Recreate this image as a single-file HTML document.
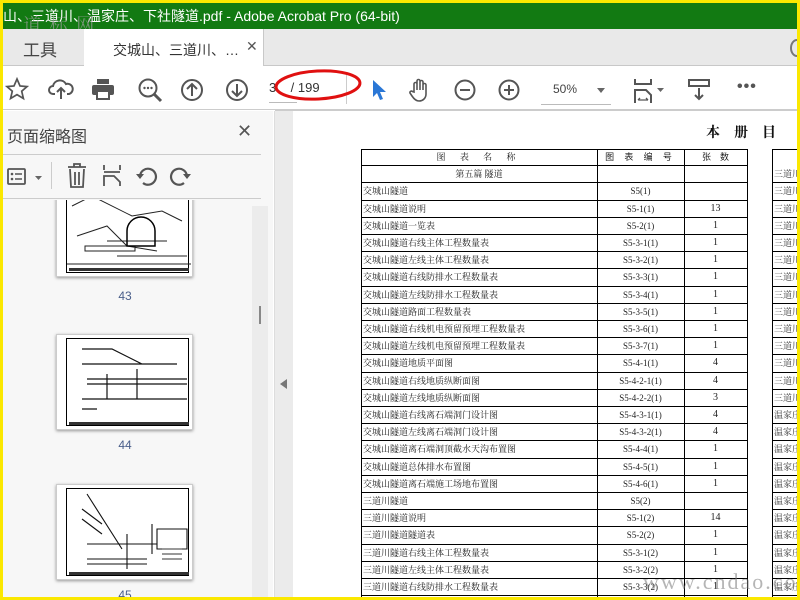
<!DOCTYPE html>
<html><head><meta charset="utf-8"><style>
*{margin:0;padding:0;box-sizing:border-box}
body{width:800px;height:600px;overflow:hidden;background:#fbe800;position:relative;font-family:"Liberation Sans","Noto Sans CJK SC",sans-serif}
.abs{position:absolute}
#win{position:absolute;left:3px;top:3px;width:794px;height:594px;background:#fff;overflow:hidden}
.title{position:absolute;left:0;top:0;width:794px;height:26px;background:#127a12;color:#fff;font-size:14px;line-height:26px;padding-left:0;white-space:nowrap}
.tabs{position:absolute;left:0;top:26px;width:794px;height:37px;background:#e9e9e9;border-bottom:1px solid #c8c8c8}
.tab1{position:absolute;left:20px;top:7px;font-size:17px;color:#444}
.tab2{position:absolute;left:81px;top:0;width:180px;height:38px;background:#fff;border-right:1px solid #c8c8c8;font-size:14px;color:#333;padding:11px 0 0 29px}
.tb{position:absolute;left:0;top:63px;width:794px;height:44px;border-bottom:1px solid #ccc;background:#fff}
svg.i{position:absolute}
.side{position:absolute;left:0;top:108px;width:270px;height:486px;background:#f7f7f7}
.strip{position:absolute;left:271px;top:108px;width:19px;height:486px;background:#ebebeb;border-left:1px solid #ddd}
.doc{position:absolute;left:290px;top:108px;width:504px;height:486px;background:#fff}
.clip{position:absolute;left:0;top:89px;width:249px;height:397px;overflow:hidden}
.thumb{position:absolute;left:53px;width:137px;height:96px;background:#fff;box-shadow:0 1px 3px rgba(0,0,0,.4);border:1px solid #ccc}
.thumb .in{position:absolute;left:9px;top:3px;right:3px;bottom:3px;border:1px solid #000}
.lbl{position:absolute;left:110px;font-size:12px;color:#4a5e8a;width:24px;text-align:center}
.row{position:absolute;left:358px;width:387px;height:17.2px;border-bottom:1px solid #000;font-size:9px;color:#222;font-family:"Noto Serif CJK SC","Liberation Serif",serif;line-height:16px}
.row span{position:absolute;top:0;height:17px}
.c1{left:2px}
.c2{left:236px;width:87px;text-align:center;font-family:"Liberation Serif","Noto Serif CJK SC",serif}
.c3{left:323px;width:63px;text-align:center;font-family:"Liberation Serif",serif;font-size:10px}
.rrow{position:absolute;left:769px;width:30px;height:17.2px;border-bottom:1px solid #000;font-size:9px;color:#333;line-height:16px;padding-left:2px;font-family:"Noto Serif CJK SC",serif;white-space:nowrap;overflow:hidden}
</style></head><body>
<div id="win">
<div class="title">山、三道川、温家庄、下社隧道.pdf - Adobe Acrobat Pro (64-bit)</div>
<div class="abs" style="left:20px;top:8px;font-size:18px;color:rgba(160,160,160,.7);font-family:'Noto Serif CJK SC',serif;letter-spacing:2px">道 标 网</div>
<div class="tabs"><div class="tab1">工具</div><div class="tab2">交城山、三道川、…<span style="position:absolute;left:162px;top:9px;font-size:14px;color:#555">✕</span></div>
<div class="abs" style="left:787px;top:10px;width:14px;height:18px;border:2px solid #777;border-radius:50%"></div></div>
<div class="tb">
<svg class="i" style="left:2px;top:11px" width="24" height="24" viewBox="0 0 24 24"><path d="M12 2l3 7 7 .6-5.3 4.6 1.7 7.3L12 17.6 5.6 21.5l1.7-7.3L2 9.6 9 9z" fill="none" stroke="#555" stroke-width="1.7"/></svg>
<svg class="i" style="left:45px;top:12px" width="26" height="22" viewBox="0 0 26 22"><path d="M7 16H5a4 4 0 0 1 0-8 7 7 0 0 1 13-2 5 5 0 0 1 3 10h-2" fill="none" stroke="#555" stroke-width="2"/><path d="M13 21V10M9 14l4-4 4 4" fill="none" stroke="#555" stroke-width="2"/></svg>
<svg class="i" style="left:88px;top:12px" width="24" height="22" viewBox="0 0 24 22"><rect x="6" y="1" width="12" height="5" fill="#555"/><rect x="1" y="7" width="22" height="10" rx="2" fill="#555"/><rect x="6" y="13" width="12" height="8" fill="#fff" stroke="#555" stroke-width="2"/></svg>
<svg class="i" style="left:134px;top:11px" width="26" height="26" viewBox="0 0 26 26"><circle cx="11" cy="11" r="8.5" fill="none" stroke="#555" stroke-width="2"/><path d="M17 17l7 7" stroke="#555" stroke-width="3"/><circle cx="7.5" cy="11" r="1.2" fill="#555"/><circle cx="11" cy="11" r="1.2" fill="#555"/><circle cx="14.5" cy="11" r="1.2" fill="#555"/></svg>
<svg class="i" style="left:177px;top:12px" width="24" height="24" viewBox="0 0 24 24"><circle cx="12" cy="12" r="10" fill="none" stroke="#555" stroke-width="2"/><path d="M12 18V6M7 11l5-5 5 5" fill="none" stroke="#555" stroke-width="2"/></svg>
<svg class="i" style="left:222px;top:12px" width="24" height="24" viewBox="0 0 24 24"><circle cx="12" cy="12" r="10" fill="none" stroke="#555" stroke-width="2"/><path d="M12 6v12M7 13l5 5 5-5" fill="none" stroke="#555" stroke-width="2"/></svg>
<div class="abs" style="left:266px;top:14px;font-size:13px;color:#333">3&nbsp;&nbsp;&nbsp;&nbsp;/ 199</div>
<div class="abs" style="left:266px;top:36px;width:28px;height:1px;background:#bbb"></div>
<div class="abs" style="left:343px;top:8px;width:1px;height:30px;background:#ccc"></div>
<svg class="i" style="left:269px;top:-1px" width="92" height="40" viewBox="0 0 92 40"><ellipse cx="46" cy="20" rx="42" ry="14" fill="none" stroke="#e01010" stroke-width="3" transform="rotate(-3 46 20)"/></svg>
<svg class="i" style="left:368px;top:13px" width="16" height="22" viewBox="0 0 16 22"><path d="M2 1v17l4-4 3 7 3-1-3-7h6z" fill="#2a77d6"/></svg>
<svg class="i" style="left:406px;top:12px" width="22" height="24" viewBox="0 0 22 24"><path d="M5 14V6a1.5 1.5 0 0 1 3 0v6V3a1.5 1.5 0 0 1 3 0v9V4a1.5 1.5 0 0 1 3 0v8V7a1.5 1.5 0 0 1 3 0v9c0 4-3 7-7 7-3 0-5-2-7-5l-2-3a1.5 1.5 0 0 1 2.5-1.5z" fill="none" stroke="#555" stroke-width="1.6"/></svg>
<svg class="i" style="left:451px;top:13px" width="22" height="22" viewBox="0 0 22 22"><circle cx="11" cy="11" r="9.5" fill="none" stroke="#555" stroke-width="2"/><path d="M6 11h10" stroke="#555" stroke-width="2"/></svg>
<svg class="i" style="left:495px;top:13px" width="22" height="22" viewBox="0 0 22 22"><circle cx="11" cy="11" r="9.5" fill="none" stroke="#555" stroke-width="2"/><path d="M6 11h10M11 6v10" stroke="#555" stroke-width="2"/></svg>
<div class="abs" style="left:550px;top:16px;font-size:12px;color:#444">50%</div>
<div class="abs" style="left:594px;top:22px;border:4px solid transparent;border-top:5px solid #666"></div>
<div class="abs" style="left:538px;top:38px;width:70px;height:1px;background:#bbb"></div>
<svg class="i" style="left:630px;top:12px" width="34" height="26" viewBox="0 0 34 26"><path d="M2 1v5h16V1M2 25V12h11l5 5v8" fill="none" stroke="#555" stroke-width="2"/><path d="M5 22h10M5 22l2-2M15 22l-2-2" stroke="#555" stroke-width="1.3"/><path d="M24 10h7l-3.5 4z" fill="#666"/></svg>
<svg class="i" style="left:685px;top:13px" width="22" height="22" viewBox="0 0 22 22"><rect x="1" y="1" width="20" height="6" fill="none" stroke="#555" stroke-width="2"/><path d="M11 9v11M7 16l4 4 4-4" fill="none" stroke="#555" stroke-width="2"/></svg>
<div class="abs" style="left:734px;top:12px;font-size:16px;color:#555;letter-spacing:1px;font-weight:bold">•••</div>
</div>
<div class="side">
<div class="abs" style="left:4px;top:12px;font-size:16px;color:#444">页面缩略图</div>
<div class="abs" style="left:234px;top:10px;font-size:18px;color:#555">✕</div>
<div class="abs" style="left:0;top:43px;width:258px;height:1px;background:#ccc"></div>
<svg class="i" style="left:4px;top:55px" width="40" height="24" viewBox="0 0 40 24"><rect x="1" y="3" width="17" height="15" rx="1" fill="none" stroke="#555" stroke-width="1.8"/><circle cx="5" cy="8" r="1.3" fill="#555"/><circle cx="5" cy="13" r="1.3" fill="#555"/><path d="M8 8h7M8 13h7" stroke="#555" stroke-width="1.6"/><path d="M28 10h7l-3.5 4z" fill="#666"/></svg>
<div class="abs" style="left:48px;top:51px;width:1px;height:27px;background:#ccc"></div>
<svg class="i" style="left:63px;top:52px" width="22" height="26" viewBox="0 0 22 26"><path d="M2 4h18M8 4V1h6v3M4 6l1 18h12l1-18M9 9v13M13 9v13" fill="none" stroke="#555" stroke-width="1.8"/></svg>
<svg class="i" style="left:98px;top:53px" width="22" height="24" viewBox="0 0 22 24"><path d="M3 1v5M19 1v5M3 8h16M3 22V12h10l6 6v4" fill="none" stroke="#555" stroke-width="1.8"/></svg>
<svg class="i" style="left:132px;top:53px" width="24" height="24" viewBox="0 0 24 24"><path d="M5 12a8 8 0 1 1 3 7" fill="none" stroke="#555" stroke-width="2.2"/><path d="M1 10l4 5 4-5z" fill="#555"/></svg>
<svg class="i" style="left:165px;top:53px" width="24" height="24" viewBox="0 0 24 24"><path d="M19 12a8 8 0 1 0-3 7" fill="none" stroke="#555" stroke-width="2.2"/><path d="M15 10l4 5 4-5z" fill="#555"/></svg>
<div class="abs" style="left:0;top:87px;width:258px;height:1px;background:#ccc"></div>
<div class="abs" style="left:249px;top:95px;width:16px;height:391px;background:#ececec"></div>
<div class="abs" style="left:256px;top:195px;width:2px;height:18px;background:#888"></div>
<div class="clip">
<div class="thumb" style="top:-19px"><div class="in">
<svg width="124" height="88" viewBox="0 0 124 88"><path d="M5 20l20-10 40 20 30-5 20 10M10 50l30-10 20 20 30 5M18 60h50v5H18zM40 55h60M50 70h70M0 78h124" fill="none" stroke="#222" stroke-width="1"/><path d="M60 45a14 14 0 0 1 28 0v15H60z" fill="none" stroke="#000" stroke-width="1.5"/><rect x="2" y="82" width="120" height="3" fill="#333"/></svg></div></div>
<div class="lbl" style="top:89px">43</div>
<div class="thumb" style="top:134px"><div class="in"><svg width="124" height="88" viewBox="0 0 124 88"><path d="M15 10h30l30 15h35M15 25h90M20 40h100M20 45h100M40 35v25M70 30v30M15 60h105M15 70h15M2 85h120" fill="none" stroke="#111" stroke-width="1.2"/><rect x="2" y="83" width="120" height="3" fill="#333"/></svg></div></div>
<div class="lbl" style="top:238px">44</div>
<div class="thumb" style="top:284px"><div class="in"><svg width="124" height="88" viewBox="0 0 124 88"><path d="M20 5l35 55M15 20l20 15M15 30l20 15M20 55h70M20 70h60M20 75h60M60 45v35M85 35v30M90 40h30v20H90z" fill="none" stroke="#111" stroke-width="1.1"/><path d="M95 60h20M95 65h20M95 70h20" stroke="#333"/><rect x="2" y="83" width="120" height="3" fill="#333"/></svg></div></div>
<div class="lbl" style="top:388px">45</div>
</div>
</div>
<div class="strip"><div class="abs" style="left:5px;top:268px;border:5px solid transparent;border-right:7px solid #777;border-left:none"></div></div>
<div class="doc"></div>
<div class="abs" style="left:272px;top:107px;width:522px;height:1px;background:#ccc"></div>
<div class="abs" style="left:703px;top:119px;font-size:14px;color:#111;font-family:'Noto Serif CJK SC',serif;letter-spacing:14px;font-weight:bold">本册目</div>
<div class="abs" style="left:358px;top:146px;width:387px;height:452px;border:1px solid #000;border-bottom:none"></div>
<div class="abs" style="left:594px;top:146px;width:1px;height:452px;background:#000"></div>
<div class="abs" style="left:681px;top:146px;width:1px;height:452px;background:#000"></div>
<div class="abs" style="left:769px;top:146px;width:40px;height:452px;border-left:1px solid #000;border-top:1px solid #000"></div>
<div id="rows"></div>
<div class="abs" style="left:640px;top:566px;font-size:22px;color:rgba(120,120,120,.55);font-family:'Liberation Serif',serif;letter-spacing:2px">www.cndao.com</div>
</div>
<script>
var d=[["图 表 名 称","图 表 编 号","张　数"],["@第五篇 隧道","",""],["交城山隧道","S5(1)",""],["交城山隧道说明","S5-1(1)","13"],["交城山隧道一览表","S5-2(1)","1"],["交城山隧道右线主体工程数量表","S5-3-1(1)","1"],["交城山隧道左线主体工程数量表","S5-3-2(1)","1"],["交城山隧道右线防排水工程数量表","S5-3-3(1)","1"],["交城山隧道左线防排水工程数量表","S5-3-4(1)","1"],["交城山隧道路面工程数量表","S5-3-5(1)","1"],["交城山隧道右线机电预留预埋工程数量表","S5-3-6(1)","1"],["交城山隧道左线机电预留预埋工程数量表","S5-3-7(1)","1"],["交城山隧道地质平面图","S5-4-1(1)","4"],["交城山隧道右线地质纵断面图","S5-4-2-1(1)","4"],["交城山隧道左线地质纵断面图","S5-4-2-2(1)","3"],["交城山隧道右线离石端洞门设计图","S5-4-3-1(1)","4"],["交城山隧道左线离石端洞门设计图","S5-4-3-2(1)","4"],["交城山隧道离石端洞顶截水天沟布置图","S5-4-4(1)","1"],["交城山隧道总体排水布置图","S5-4-5(1)","1"],["交城山隧道离石端施工场地布置图","S5-4-6(1)","1"],["三道川隧道","S5(2)",""],["三道川隧道说明","S5-1(2)","14"],["三道川隧道隧道表","S5-2(2)","1"],["三道川隧道右线主体工程数量表","S5-3-1(2)","1"],["三道川隧道左线主体工程数量表","S5-3-2(2)","1"],["三道川隧道右线防排水工程数量表","S5-3-3(2)","1"]];
var h="";for(var i=0;i<d.length;i++){var t=146+i*17.2,r=d[i],c1=r[0];
if(i==0){h+='<div class="row" style="top:'+t+'px"><span style="left:0;width:236px;text-align:center;letter-spacing:6px">'+c1+'</span><span class="c2" style="font-family:serif;letter-spacing:4px">'+r[1]+'</span><span class="c3" style="font-size:9px">'+r[2]+'</span></div>';}
else if(c1[0]=="@"){h+='<div class="row" style="top:'+t+'px"><span style="left:0;width:236px;text-align:center">'+c1.slice(1)+'</span></div>';}
else h+='<div class="row" style="top:'+t+'px"><span class="c1">'+c1+'</span><span class="c2">'+r[1]+'</span><span class="c3">'+r[2]+'</span></div>';
if(i>0)h+='<div class="rrow" style="top:'+t+'px">'+(i<15?'三道川':'温家庄')+'</div>';}
document.getElementById("rows").innerHTML=h;
</script>
</body></html>
